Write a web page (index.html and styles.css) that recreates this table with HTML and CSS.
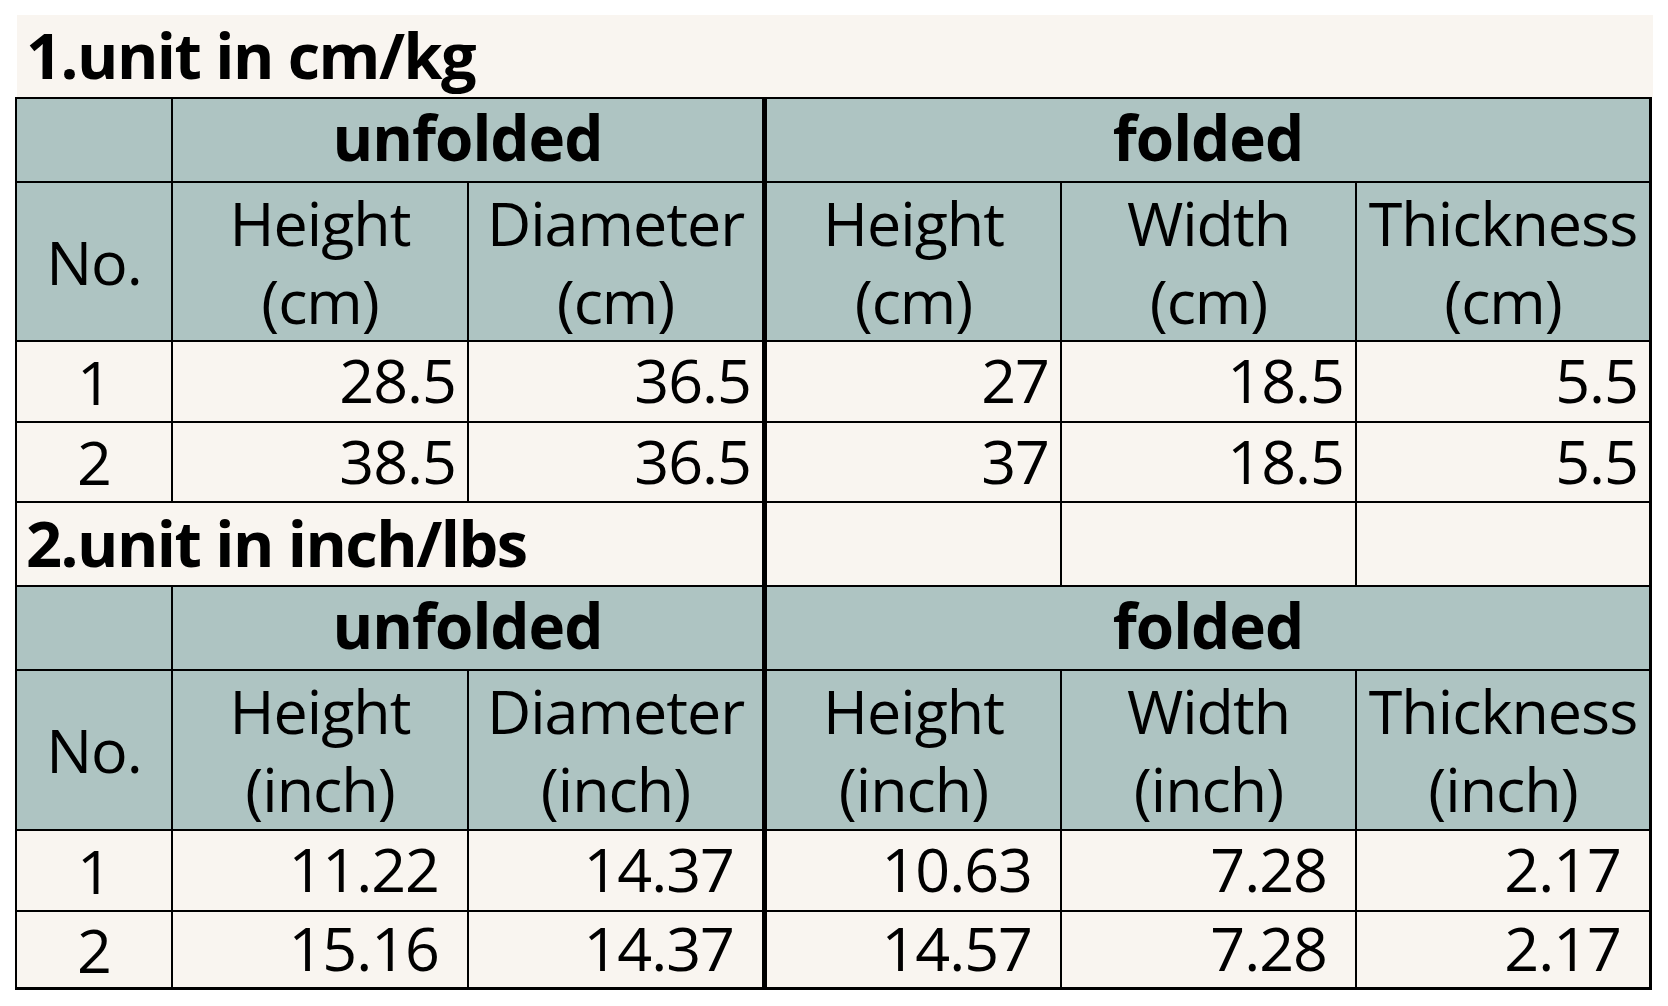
FILE: index.html
```html
<!DOCTYPE html>
<html>
<head>
<meta charset="utf-8">
<link rel="stylesheet" href="styles.css">
</head>
<body>
<div class="sheet">
  <div class="title1"><span class="ttl">1.unit in cm/kg</span></div>
  <div class="grid">
    <div class="c hd"></div>
    <div class="c hd ctr b span2 th">unfolded</div>
    <div class="c hd ctr b span3 end">folded</div>

    <div class="c hd ctr">No.</div>
    <div class="c hd ctr two">Height<br>(cm)</div>
    <div class="c hd ctr two th">Diameter<br>(cm)</div>
    <div class="c hd ctr two">Height<br>(cm)</div>
    <div class="c hd ctr two">Width<br>(cm)</div>
    <div class="c hd ctr two end">Thickness<br>(cm)</div>

    <div class="c ctr">1</div>
    <div class="c num">28.5</div>
    <div class="c num th">36.5</div>
    <div class="c num">27</div>
    <div class="c num">18.5</div>
    <div class="c num end">5.5</div>

    <div class="c ctr">2</div>
    <div class="c num">38.5</div>
    <div class="c num th">36.5</div>
    <div class="c num">37</div>
    <div class="c num">18.5</div>
    <div class="c num end">5.5</div>

    <div class="c span3 th title2"><span class="ttl">2.unit in inch/lbs</span></div>
    <div class="c"></div>
    <div class="c"></div>
    <div class="c end"></div>

    <div class="c hd"></div>
    <div class="c hd ctr b span2 th">unfolded</div>
    <div class="c hd ctr b span3 end">folded</div>

    <div class="c hd ctr">No.</div>
    <div class="c hd ctr two">Height<br>(inch)</div>
    <div class="c hd ctr two th">Diameter<br>(inch)</div>
    <div class="c hd ctr two">Height<br>(inch)</div>
    <div class="c hd ctr two">Width<br>(inch)</div>
    <div class="c hd ctr two end">Thickness<br>(inch)</div>

    <div class="c ctr">1</div>
    <div class="c num num2">11.22</div>
    <div class="c num num2 th">14.37</div>
    <div class="c num num2">10.63</div>
    <div class="c num num2">7.28</div>
    <div class="c num num2 end">2.17</div>

    <div class="c ctr bot">2</div>
    <div class="c num num2 bot">15.16</div>
    <div class="c num num2 th bot">14.37</div>
    <div class="c num num2 bot">14.57</div>
    <div class="c num num2 bot">7.28</div>
    <div class="c num num2 end bot">2.17</div>
  </div>
</div>
</body>
</html>
```

FILE: styles.css
```css
html, body {
  margin: 0;
  padding: 0;
  background: #ffffff;
}

body {
  font-family: "Open Sans", "Noto Sans", sans-serif;
  color: #000000;
}

.sheet {
  padding: 15px 0 0 15px;
  width: 1640px;
}

.title1 {
  margin-left: 2px;
  width: 1636px;
  height: 82px;
  background: #f9f5f0;
  display: flex;
  align-items: center;
  box-sizing: border-box;
  padding-left: 9px;
  padding-bottom: 4px;
}

.ttl {
  font-weight: 700;
  font-size: 63px;
  letter-spacing: -1.5px;
  line-height: 1;
}

.grid {
  display: grid;
  grid-template-columns: 156px 296px 298px 295px 295px 295px;
  grid-template-rows: 84px 159px 81px 80px 84px 84px 160px 81px 78px;
  border-left: 2px solid #000;
  border-top: 2px solid #000;
  width: 1635px;
}

.c {
  box-sizing: border-box;
  border-right: 2px solid #000;
  border-bottom: 2px solid #000;
  background: #f9f5f0;
  font-size: 61px;
  letter-spacing: -1px;
  line-height: 66px;
  display: flex;
  align-items: center;
  white-space: nowrap;
}

.hd {
  background: #aec4c2;
}

.ctr {
  justify-content: center;
  text-align: center;
}

.two {
  line-height: 78px;
}

.b {
  font-weight: 700;
  font-size: 62px;
  padding-bottom: 6px;
}

.span2 {
  grid-column: span 2;
}

.span3 {
  grid-column: span 3;
}

.th {
  border-right-width: 5px;
}

.end {
  border-right-width: 3px;
}

.bot {
  border-bottom-width: 3px;
}

.num {
  justify-content: flex-end;
  padding-right: 11px;
  padding-bottom: 3px;
}

.num2 {
  padding-right: 28px;
}

.title2 {
  padding-left: 9px;
  padding-bottom: 4px;
}
```
